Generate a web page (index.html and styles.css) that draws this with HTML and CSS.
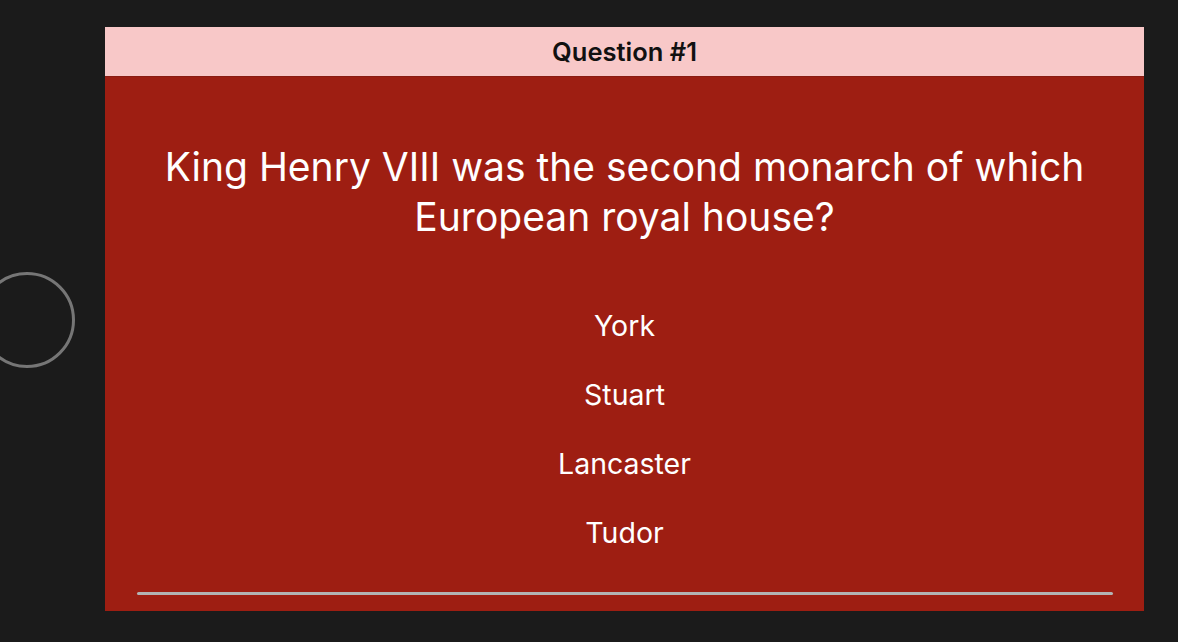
FILE: index.html
```html
<!DOCTYPE html>
<html>
<head>
<meta charset="utf-8">
<link rel="stylesheet" href="styles.css">
</head>
<body>
<div class="home-button"></div>
<div class="screen">
  <div class="header">Question #1</div>
  <div class="content">
    <div class="question">King Henry VIII was the second monarch of which<br>European royal house?</div>
    <div class="answers">
      <div class="answer">York</div>
      <div class="answer">Stuart</div>
      <div class="answer">Lancaster</div>
      <div class="answer">Tudor</div>
    </div>
    <div class="indicator"></div>
  </div>
</div>
</body>
</html>
```
FILE: styles.css
```css
html, body {
  margin: 0;
  height: 100%;
  background: #1b1b1b;
  overflow: hidden;
}
body {
  padding: 27px 34px 0 105px;
  box-sizing: border-box;
  font-family: Inter, "Noto Sans", sans-serif;
}
.home-button {
  position: absolute;
  left: -21px;
  top: 272px;
  width: 90px;
  height: 90px;
  border: 3px solid #767676;
  border-radius: 50%;
}
.screen {
  width: 1039px;
  height: 584px;
  background: #9e1e12;
  display: flex;
  flex-direction: column;
}
.header {
  height: 49px;
  background: #f8c8c8;
  border-bottom: 1px solid #8a1c12;
  display: flex;
  align-items: center;
  justify-content: center;
  font-weight: 600;
  font-size: 25.5px;
  color: #111;
}
.content {
  flex: 1;
  display: flex;
  flex-direction: column;
  align-items: center;
  color: #fff;
}
.question {
  margin-top: 65px;
  font-size: 39px;
  line-height: 50px;
  text-align: center;
}
.answers {
  margin-top: 67px;
  display: flex;
  flex-direction: column;
  align-items: center;
  gap: 35px;
}
.answer {
  font-size: 28.5px;
  line-height: 34px;
}
.indicator {
  margin-top: auto;
  margin-bottom: 16px;
  width: 976px;
  height: 3px;
  border-radius: 2px;
  background: #b3b3b3;
}
```
